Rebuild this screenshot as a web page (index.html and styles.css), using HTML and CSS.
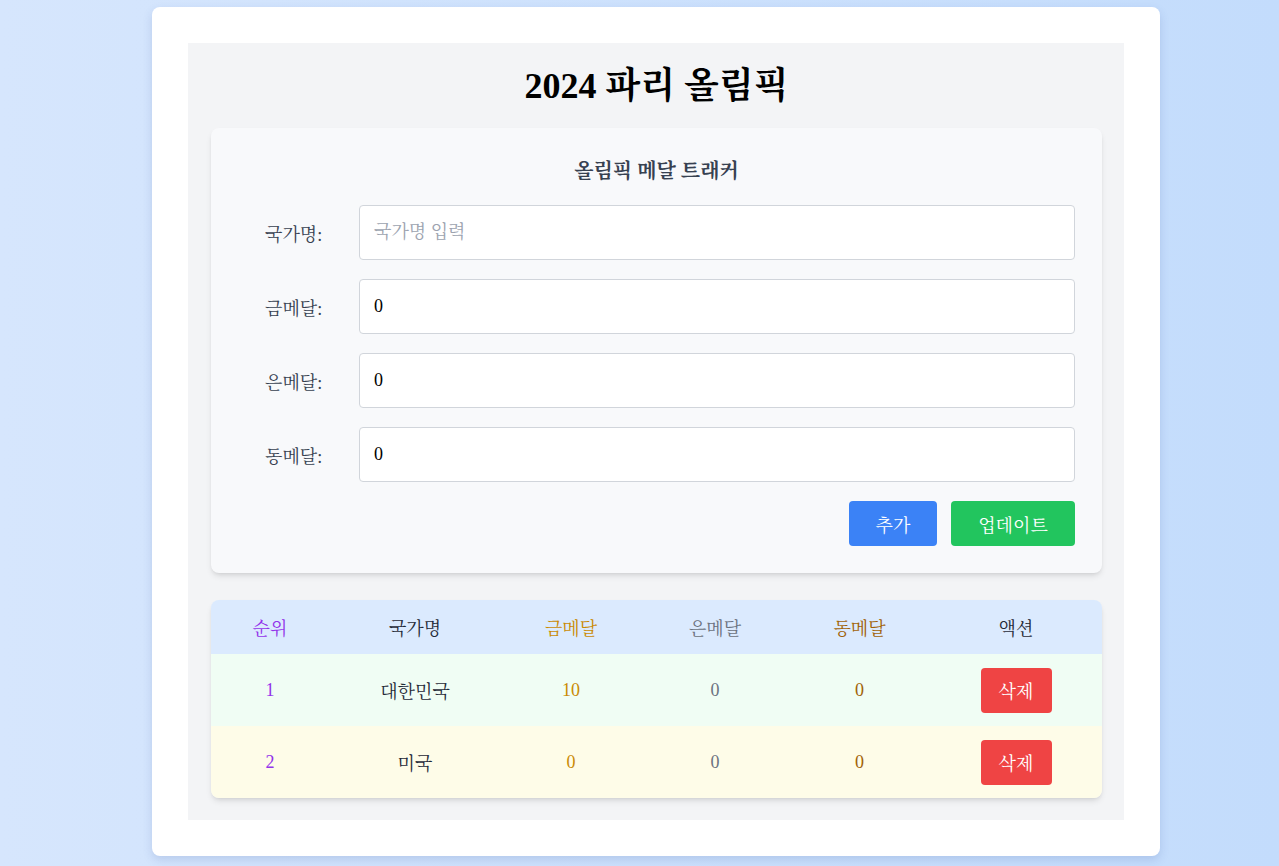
FILE: index.html
```html
<!DOCTYPE html>
<html lang="ko">
<head>
<meta charset="utf-8">
<title>2024 파리 올림픽</title>
<link rel="stylesheet" href="styles.css">
</head>
<body>
<div class="page">
  <div class="card">
    <div class="panel">
      <h1 class="title">2024 파리 올림픽</h1>
      <div class="form-card">
        <h2 class="form-title">올림픽 메달 트래커</h2>
        <div class="row">
          <label class="label">국가명:</label>
          <input class="input" type="text" placeholder="국가명 입력">
        </div>
        <div class="row">
          <label class="label">금메달:</label>
          <input class="input" type="text" value="0">
        </div>
        <div class="row">
          <label class="label">은메달:</label>
          <input class="input" type="text" value="0">
        </div>
        <div class="row">
          <label class="label">동메달:</label>
          <input class="input" type="text" value="0">
        </div>
        <div class="actions">
          <button class="btn btn-add">추가</button>
          <button class="btn btn-update">업데이트</button>
        </div>
      </div>
      <div class="table-wrap">
        <table class="table">
          <colgroup>
            <col class="c1"><col class="c2"><col class="c3"><col class="c4"><col class="c5"><col class="c6">
          </colgroup>
          <thead>
            <tr class="head">
              <th class="rank">순위</th>
              <th class="name">국가명</th>
              <th class="gold">금메달</th>
              <th class="silver">은메달</th>
              <th class="bronze">동메달</th>
              <th class="name">액션</th>
            </tr>
          </thead>
          <tbody>
            <tr class="r-green">
              <td class="rank">1</td>
              <td class="name">대한민국</td>
              <td class="gold">10</td>
              <td class="silver">0</td>
              <td class="bronze">0</td>
              <td><button class="btn btn-del">삭제</button></td>
            </tr>
            <tr class="r-yellow">
              <td class="rank">2</td>
              <td class="name">미국</td>
              <td class="gold">0</td>
              <td class="silver">0</td>
              <td class="bronze">0</td>
              <td><button class="btn btn-del">삭제</button></td>
            </tr>
          </tbody>
        </table>
      </div>
    </div>
  </div>
</div>
</body>
</html>
```
FILE: styles.css
```css
* { box-sizing: border-box; }
html, body { margin: 0; padding: 0; }
body {
  min-height: 866px;
  background: linear-gradient(to right, #d6e6fd, #c3dcfc);
  font-family: "Liberation Serif", "Noto Serif CJK KR", "Noto Serif KR", "Nanum Myeongjo", "NanumMyeongjo", "UnBatang", "Baekmuk Batang", serif;
}
.page {
  padding: 7px 119px 10px 152px;
}
.card {
  background: #fff;
  border-radius: 8px;
  padding: 36px;
  box-shadow: 0 4px 10px rgba(59, 90, 160, 0.18);
}
.panel {
  background: #f3f4f6;
  padding: 23px 22px 22px 23px;
}
.title {
  margin: 0 0 22px;
  text-align: center;
  font-size: 36px;
  line-height: 40px;
  font-weight: 700;
  color: #000;
}
.form-card {
  background: #f8f9fb;
  border-radius: 8px;
  padding: 28px 27px 27px 54px;
  box-shadow: 0 4px 6px -1px rgba(0,0,0,0.1), 0 2px 4px -2px rgba(0,0,0,0.1);
}
.form-title {
  margin: 0 0 19px;
  text-align: center;
  font-size: 20px;
  line-height: 30px;
  font-weight: 700;
  color: #374151;
  padding-right: 27px;
}
.row {
  display: flex;
  align-items: center;
  margin-bottom: 19px;
}
.label {
  width: 94px;
  font-size: 18px;
  color: #374151;
}
.input {
  flex: 1;
  height: 55px;
  border: 1px solid #d1d5db;
  border-radius: 4px;
  padding: 0 14px;
  font-family: inherit;
  font-size: 18px;
  color: #000;
  background: #fff;
  outline: none;
}
.input::placeholder { color: #9ca3af; }
.actions {
  display: flex;
  justify-content: flex-end;
  gap: 14px;
}
.btn {
  border: none;
  border-radius: 4px;
  height: 45px;
  font-family: inherit;
  font-size: 18px;
  color: #fff;
  cursor: pointer;
}
.btn-add { width: 88px; background: #3b82f6; }
.btn-update { width: 124px; background: #22c55e; }
.btn-del { width: 71px; background: #ef4444; }
.table-wrap {
  margin-top: 27px;
  border-radius: 8px;
  overflow: hidden;
  box-shadow: 0 4px 6px -1px rgba(0,0,0,0.1), 0 2px 4px -2px rgba(0,0,0,0.1);
}
.table {
  width: 100%;
  border-collapse: collapse;
  table-layout: fixed;
  font-size: 18px;
}
.c1 { width: 118px; }
.c2 { width: 172px; }
.c3 { width: 140px; }
.c4 { width: 148px; }
.c5 { width: 141px; }
.c6 { width: 172px; }
.table th, .table td {
  text-align: center;
  padding: 0;
  font-weight: 400;
}
.head { background: #dbeafe; height: 54px; }
.r-green { background: #f0fdf4; height: 72px; }
.r-yellow { background: #fefce8; height: 72px; }
.rank { color: #9333ea; }
.name { color: #1f2937; }
.gold { color: #ca8a04; }
.silver { color: #6b7280; }
.bronze { color: #a16207; }
```
